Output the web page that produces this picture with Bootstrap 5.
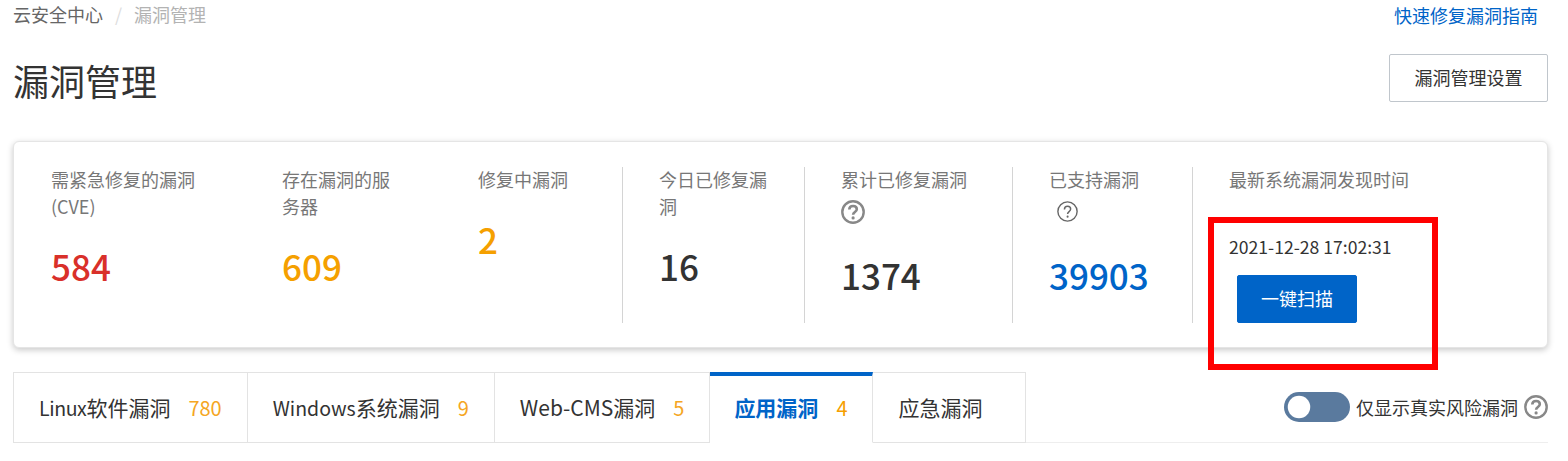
<!DOCTYPE html>
<html lang="zh-CN">
<head>
<meta charset="utf-8">
<title>漏洞管理</title>
<link href="https://cdn.jsdelivr.net/npm/bootstrap@5.3.0/dist/css/bootstrap.min.css" rel="stylesheet">
<style>
html,body{background:#fff;overflow:hidden}
body{font-family:"Noto Sans CJK SC","Noto Sans",sans-serif;font-size:18px;color:#333;line-height:27px}
.pg{padding:0 20px 0 13px}
.top-row{height:28px}
.top-row .breadcrumb{margin:0;--bs-breadcrumb-divider-color:#ddd;--bs-breadcrumb-item-active-color:#b3b3b3;--bs-breadcrumb-item-padding-x:12px;font-size:18px;line-height:28px}
.top-row .breadcrumb-item+.breadcrumb-item::before{padding-right:12px}
.top-row .breadcrumb a{color:#666;text-decoration:none}
.guide{color:#0064c8;text-decoration:none;margin:2px 10px 0 0;line-height:28px}
.title-row{margin-top:26px;height:48px}
.title-row h1{font-size:36px;line-height:48px;font-weight:400;margin:3px 0 0;color:#333}
.set-btn{width:159px;height:48px;font-size:18px;line-height:27px;color:#333;background:#fff;border:1px solid #c0c6cc;border-radius:2px;padding:0 0 2px}
.stat-card{margin-top:39px;height:207px;border:1px solid #e5e5e5;border-radius:6px;box-shadow:0 2px 6px rgba(0,0,0,.22);padding:25px 0 0 37px;position:relative}
.stat-grid{display:grid;grid-template-columns:231px 196px 144px 182px 208px 180px 1fr;height:156px}
.cell{padding-right:20px}
.cell.ruled{border-left:1px solid #d4d4d4;padding-left:36px}
.cell.narrow{padding-right:78px}
.lab{color:#777;margin-top:-1px}
.num{font-size:35px;line-height:54px;margin-top:19px;font-weight:500}
.hint-line{height:35px;margin-top:1px;display:flex;align-items:center}
.q{color:#888;display:block}
.red{color:#d9302a}.org{color:#f5a000}.blu{color:#0064c8}
.when{font-size:17.6px;line-height:24px;margin-top:42px;color:#333}
.scan{width:120px;height:48px;margin:16px 0 0 8px;background:#0064c8;border-color:#0064c8;font-size:18px;border-radius:2px;padding:0 0 2px;color:#fff}
.mark-box{position:absolute;left:1194px;top:75px;width:230px;height:153px;border:6px solid #f00;pointer-events:none}
.tab-row{margin-top:24px;height:71px;border-bottom:1px solid #eee}
.tab-row .nav-tabs{border:0;--bs-nav-tabs-border-width:0}
.vtab{display:flex;align-items:center;gap:18px;height:71px;padding:0 25px;font-size:21px;color:#333;border:1px solid #e3e3e3;border-left-width:0;background:#fff;text-decoration:none}
.nav-item:first-child .vtab{border-left-width:1px}
.vtab.on{color:#0064c8;font-weight:700;border-top:4px solid #0064c8;border-bottom-color:#fff;padding:0 25px 3px 24px}
.lat{font-size:19.5px}
.lat-tight{letter-spacing:-.4px}
.cnt{font-size:20px;color:#f5a623;font-weight:400}
.vtab.on .cnt{color:#f5a000}
.sw-wrap{gap:6px}
.form-switch .form-check-input.tgl{width:66px;height:30px;margin:0;padding:0;border:0;background-color:#5a7a9e;opacity:1;box-shadow:none;float:none;margin-left:0;background-image:url("data:image/svg+xml,<svg xmlns='http://www.w3.org/2000/svg' viewBox='-4 -4 8 8'><circle r='3' fill='%23fff'/></svg>");background-position:left center}
.form-switch.sw-box{padding:0;margin:0;min-height:0;display:flex}
</style>
</head>
<body>
<div class="pg">
  <div class="top-row d-flex justify-content-between align-items-center">
    <nav aria-label="breadcrumb"><ol class="breadcrumb">
      <li class="breadcrumb-item"><a href="#">云安全中心</a></li>
      <li class="breadcrumb-item active" aria-current="page">漏洞管理</li>
    </ol></nav>
    <a class="guide" href="#">快速修复漏洞指南</a>
  </div>
  <div class="title-row d-flex justify-content-between align-items-center">
    <h1>漏洞管理</h1>
    <button type="button" class="btn set-btn">漏洞管理设置</button>
  </div>
  <div class="stat-card card">
    <div class="stat-grid">
      <div class="cell"><div class="lab">需紧急修复的漏洞<br>(CVE)</div><div class="num red">584</div></div>
      <div class="cell narrow"><div class="lab">存在漏洞的服务器</div><div class="num org">609</div></div>
      <div class="cell"><div class="lab">修复中漏洞</div><div class="num org">2</div></div>
      <div class="cell ruled"><div class="lab">今日已修复漏洞</div><div class="num">16</div></div>
      <div class="cell ruled"><div class="lab">累计已修复漏洞</div>
        <div class="hint-line"><svg class="q" width="24" height="24" viewBox="0 0 24 24" fill="none" stroke="currentColor"><circle cx="12" cy="12" r="10.7" stroke-width="2.4"/><path d="M8.3 9.6c0-2.3 1.6-3.6 3.8-3.6s3.7 1.3 3.7 3.2c0 2.9-3.7 2.8-3.7 5.6" stroke-width="2.6"/><circle cx="12.1" cy="17.9" r="1.6" fill="currentColor" stroke="none"/></svg></div>
        <div class="num">1374</div></div>
      <div class="cell ruled"><div class="lab">已支持漏洞</div>
        <div class="hint-line ps-2"><svg class="q" style="color:#666" width="21" height="21" viewBox="0 0 24 24" fill="none" stroke="currentColor"><circle cx="12" cy="12" r="11" stroke-width="1.6"/><path d="M8.5 9.6c0-2.3 1.5-3.6 3.6-3.6s3.5 1.3 3.5 3.2c0 2.9-3.5 2.8-3.5 5.6" stroke-width="1.7"/><circle cx="12.1" cy="17.9" r="1.2" fill="currentColor" stroke="none"/></svg></div>
        <div class="num blu">39903</div></div>
      <div class="cell ruled"><div class="lab">最新系统漏洞发现时间</div>
        <div class="when">2021-12-28 17:02:31</div>
        <button type="button" class="btn btn-primary scan">一键扫描</button></div>
    </div>
    <div class="mark-box"></div>
  </div>
  <div class="tab-row d-flex justify-content-between align-items-center">
    <ul class="nav nav-tabs">
      <li class="nav-item"><a class="vtab" href="#"><span><span class="lat lat-tight">Linux</span>软件漏洞</span><span class="cnt">780</span></a></li>
      <li class="nav-item"><a class="vtab" href="#"><span><span class="lat">Windows</span>系统漏洞</span><span class="cnt">9</span></a></li>
      <li class="nav-item"><a class="vtab" href="#">Web-CMS漏洞<span class="cnt">5</span></a></li>
      <li class="nav-item"><a class="vtab on" href="#">应用漏洞<span class="cnt">4</span></a></li>
      <li class="nav-item"><a class="vtab" href="#">应急漏洞<span></span></a></li>
    </ul>
    <div class="d-flex align-items-center sw-wrap">
      <div class="form-check form-switch sw-box"><input class="form-check-input tgl" type="checkbox" role="switch" aria-label="仅显示真实风险漏洞"></div>
      <span>仅显示真实风险漏洞</span>
      <svg class="q" width="24" height="24" viewBox="0 0 24 24" fill="none" stroke="currentColor"><circle cx="12" cy="12" r="10.7" stroke-width="2.4"/><path d="M8.3 9.6c0-2.3 1.6-3.6 3.8-3.6s3.7 1.3 3.7 3.2c0 2.9-3.7 2.8-3.7 5.6" stroke-width="2.6"/><circle cx="12.1" cy="17.9" r="1.6" fill="currentColor" stroke="none"/></svg>
    </div>
  </div>
</div>
<script src="https://cdn.jsdelivr.net/npm/bootstrap@5.3.0/dist/js/bootstrap.bundle.min.js"></script>
</body>
</html>
